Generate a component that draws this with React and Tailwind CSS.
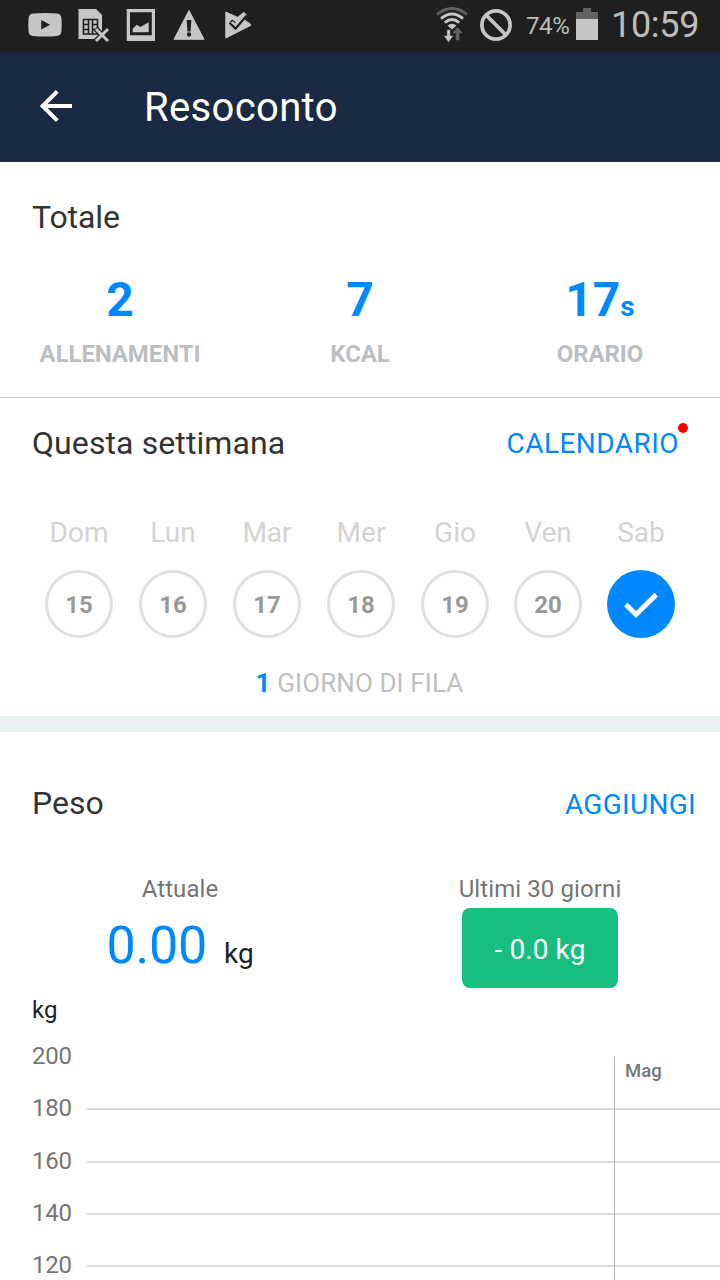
import React from 'react';

const totals = [
    { value: '2', label: 'ALLENAMENTI' },
    { value: '7', label: 'KCAL' },
    { value: '17', unit: 's', label: 'ORARIO' },
];

const days = [
    { name: 'Dom', date: 15 },
    { name: 'Lun', date: 16 },
    { name: 'Mar', date: 17 },
    { name: 'Mer', date: 18 },
    { name: 'Gio', date: 19 },
    { name: 'Ven', date: 20 },
    { name: 'Sab', date: 21, done: true },
];

const weights = [200, 180, 160, 140, 120];

const StatusBar = () => (
    <div className="flex h-[51px] shrink-0 items-start justify-between bg-[#1f1f1f] pl-7 pr-[21px] text-[#bdbdbd]">
        <div className="flex">
            <svg className="h-[50px] w-[34px]" viewBox="0 0 34 50">
                <path fill="#c6c6c6" fillRule="evenodd" d="M5 13.4Q17 12.4 29 13.4Q33 13.8 33.4 18Q34 25 33.4 31.5Q33 35.7 29 36Q17 37 5 36Q1 35.7 .6 31.5Q0 25 .6 18Q1 13.8 5 13.4ZM13.2 20v9.6l9-4.8z" />
            </svg>
            <svg className="ml-4 h-[50px] w-8" viewBox="0 0 32 50">
                <path fill="#c6c6c6" d="M.5 9h17.5l6 6v24H.5z" />
                <path fill="none" stroke="#1f1f1f" strokeWidth="1.6" d="M5.5 19.5h14V34h-14zM5.5 24.5h5M5.5 29.5h5M14.5 24.5h5M14.5 29.5h5M10.5 19.5V34M14.5 19.5v14.5" />
                <path stroke="#1f1f1f" strokeWidth="5.5" d="M17.5 28.5l13 13M30.5 28.5l-13 13" />
                <path stroke="#c6c6c6" strokeWidth="3" d="M18 29l12 12M30 29L18 41" />
            </svg>
            <svg className="ml-4 h-[50px] w-8" viewBox="0 0 32 50">
                <path fill="#c6c6c6" fillRule="evenodd" d="M.7 9H29v32H.7zM4 12.3v22.9h21.8V12.3z" />
                <path fill="#c6c6c6" d="M6.7 32.3v-3.6l4-4 3.5 2.3 8.5-4.7v10z" />
            </svg>
            <svg className="ml-[15px] h-[50px] w-8" viewBox="0 0 32 50">
                <path fill="#c6c6c6" d="M16 10.5L31 39.3H1z" stroke="#c6c6c6" strokeWidth="1" strokeLinejoin="round" />
                <path fill="#1f1f1f" d="M13.6 20h4.8l-.9 11.5h-3z" />
                <circle cx="16" cy="34.5" r="2.2" fill="#1f1f1f" />
            </svg>
            <svg className="ml-5 h-[50px] w-[27px]" viewBox="0 0 27 50">
                <path fill="#c6c6c6" stroke="#c6c6c6" strokeLinejoin="round" d="M.8 12L12.6 17.4 18.8 12.3 21 14.5 19.5 20 25.6 24.2V25.4L.8 38z" />
                <path fill="none" stroke="#1f1f1f" strokeWidth="2.2" d="M4.5 22.8l6 5.8L21.5 15.7" />
                <path fill="none" stroke="#1f1f1f" strokeWidth="1.2" d="M5 22.5l2.3-2.3 3.2 2.6" />
            </svg>
        </div>
        <div className="mr-[2px] flex h-[50px] items-center">
            <svg className="h-[50px] w-8" viewBox="0 0 32 50" fill="none">
                <path stroke="#626262" strokeWidth="2.8" d="M1 14.5Q16 2.5 31 14.5" />
                <path stroke="#c6c6c6" strokeWidth="2.9" d="M5 18.7Q16 9.3 27 18.7M8.8 22.6Q16 16.6 23.2 22.6" />
                <path fill="#c6c6c6" d="M11.5 25.5Q16 22 20.5 25.5L16 29.5z" />
                <path fill="#c6c6c6" stroke="#1f1f1f" strokeWidth=".6" d="M10.8 29.5h3.6v6h3.3l-5.1 7-5.1-7h3.3z" />
                <path fill="#626262" d="M19.7 40.3v-7h-3.3l5.2-6.2 5.1 6.2h-3.3v7z" />
            </svg>
            <svg className="ml-3 h-[50px] w-8" viewBox="0 0 32 50" fill="none" stroke="#c6c6c6" strokeWidth="3.7">
                <circle cx="16" cy="25" r="14.1" />
                <path d="M6 15l20 20" />
            </svg>
            <span className="ml-[14px] w-[50px] pt-px text-2xl leading-[50px] tracking-[-0.4px]">74%</span>
            <svg className="h-[50px] w-[22px]" viewBox="0 0 22 50">
                <path fill="#626262" d="M7 8h8v4h7v8H0v-8h7z" />
                <path fill="#c6c6c6" d="M0 19h22v21H0z" />
            </svg>
            <span className="ml-[13px] w-[86px] text-4xl leading-[50px] tracking-[-0.3px]">10:59</span>
        </div>
    </div>
);

const Header = () => (
    <header className="flex h-[111px] shrink-0 items-center bg-[#1b2a43] bg-linear-to-b from-[#17233a] to-[#1b2a43] to-5% pl-10 text-white">
        <svg className="mb-[2px] h-8 w-8" viewBox="0 0 32 32" fill="none" stroke="white" strokeWidth="4">
            <path d="M32 16H3M17.3 1.4L2.7 16l14.6 14.6" />
        </svg>
        <h1 className="ml-[72px] pt-[2px] text-[40px] leading-[48px] tracking-[0.35px]">Resoconto</h1>
    </header>
);

const Totals = () => (
    <section className="flex h-[236px] shrink-0 flex-col border-b border-[#d0d0d0] pt-9">
        <h2 className="px-8 text-[32px] leading-[38px] tracking-[-0.1px] text-[#333]">Totale</h2>
        <div className="mt-[34px] grid grid-cols-3 text-center font-bold">
            {totals.map((item) => (
                <div key={item.label}>
                    <div className="h-[60px] text-5xl leading-[60px] text-[#0088ff]">
                        {item.value}
                        {item.unit && <span className="text-[28px] leading-none">{item.unit}</span>}
                    </div>
                    <div className="mt-[9px] text-2xl leading-[30px] tracking-[-0.1px] text-[#bdbec2]">{item.label}</div>
                </div>
            ))}
        </div>
    </section>
);

const Week = () => (
    <section className="flex h-[334px] shrink-0 flex-col border-b-16 border-[#eaeff2] pt-[26px]">
        <div className="flex items-center justify-between pl-8 pr-[41px]">
            <h2 className="text-[32px] leading-[38px] tracking-[0.1px] text-[#333]">Questa settimana</h2>
            <div className="relative pt-[2px] text-[28px] leading-[36px] tracking-[0.45px] text-[#0088ff]">
                CALENDARIO
                <span className="absolute -right-[9px] -top-[1px] h-[10px] w-[10px] rounded-full bg-[#ff0000]" />
            </div>
        </div>
        <div className="mt-[52px] flex gap-[26px] px-[45px]">
            {days.map((day, index) => (
                <div key={day.name} className={`flex w-[68px] shrink-0 flex-col items-center ${index > 4 ? '-ml-px' : ''}`}>
                    <span className="text-[28px] leading-[38px] text-[#d3d3d3]">{day.name}</span>
                    {day.done ? (
                        <div className="mt-[18px] flex h-[68px] w-[68px] items-center justify-center rounded-full bg-[#0088ff]">
                            <svg className="h-[68px] w-[68px]" viewBox="0 0 68 68" fill="none" stroke="white" strokeWidth="5">
                                <path d="M18.8 34.5l10.2 10L49.2 24.6" />
                            </svg>
                        </div>
                    ) : (
                        <div className="mt-[18px] flex h-[68px] w-[68px] items-center justify-center rounded-full border-3 border-[#e0e0e0] pt-px text-2xl font-bold text-[#999]">
                            {day.date}
                        </div>
                    )}
                </div>
            ))}
        </div>
        <p className="mt-[30px] pr-px text-center text-[26px] leading-[30px] tracking-[0.1px] text-[#c0c0c0]">
            <span className="font-bold text-[#0088ff]">1</span> GIORNO DI FILA
        </p>
    </section>
);

const Chart = () => (
    <div className="relative flex flex-col">
        {weights.map((weight, index) => (
            <div key={weight} className="flex h-[52.3px] shrink-0 items-center pl-8">
                <span className="w-[55px] text-2xl leading-[30px] tracking-[-0.2px] text-[#757575]">{weight}</span>
                {index > 0 && <div className="mt-[2px] h-[2px] flex-1 bg-[#dadada]" />}
            </div>
        ))}
        <div className="absolute bottom-0 left-[614px] top-[27px] border-l border-[#b0b0b0] pl-[10px] text-[18.5px] font-medium leading-[28px] text-[#757575]">
            Mag
        </div>
    </div>
);

const Weight = () => (
    <section className="flex flex-col pt-[52px]">
        <div className="flex items-center justify-between pl-8 pr-6">
            <h2 className="text-[32px] leading-[38px] text-[#333]">Peso</h2>
            <span className="pt-[3px] text-[28px] leading-[35px] tracking-[0.3px] text-[#0088ff]">AGGIUNGI</span>
        </div>
        <div className="mt-[52px] grid grid-cols-2 text-center">
            <div>
                <div className="text-2xl leading-[30px] tracking-[0.1px] text-[#757575]">Attuale</div>
                <div className="flex h-[84px] items-baseline justify-center pt-[2px] leading-[80px] text-[#212121]">
                    <span className="text-[52px] tracking-[-0.2px] text-[#0088ff]">0.00</span>
                    <span className="ml-[17px] text-[28px]">kg</span>
                </div>
            </div>
            <div className="flex flex-col items-center">
                <div className="text-2xl leading-[30px] tracking-[0.1px] text-[#757575]">Ultimi 30 giorni</div>
                <div className="mt-1 flex h-20 w-[156px] items-center justify-center rounded-lg bg-[#18be80] pt-[3px] text-[28px] tracking-[0.1px] text-white">
                    - 0.0 kg
                </div>
            </div>
        </div>
        <div className="mt-[7px] px-8 text-2xl leading-[30px] text-[#212121]">kg</div>
        <div className="mt-[5px]">
            <Chart />
        </div>
    </section>
);

const App = () => {
    return (
        <div className="flex h-[1280px] w-[720px] flex-col overflow-hidden bg-white font-[Roboto,sans-serif]">
            <StatusBar />
            <Header />
            <Totals />
            <Week />
            <Weight />
        </div>
    );
};

export default App;
